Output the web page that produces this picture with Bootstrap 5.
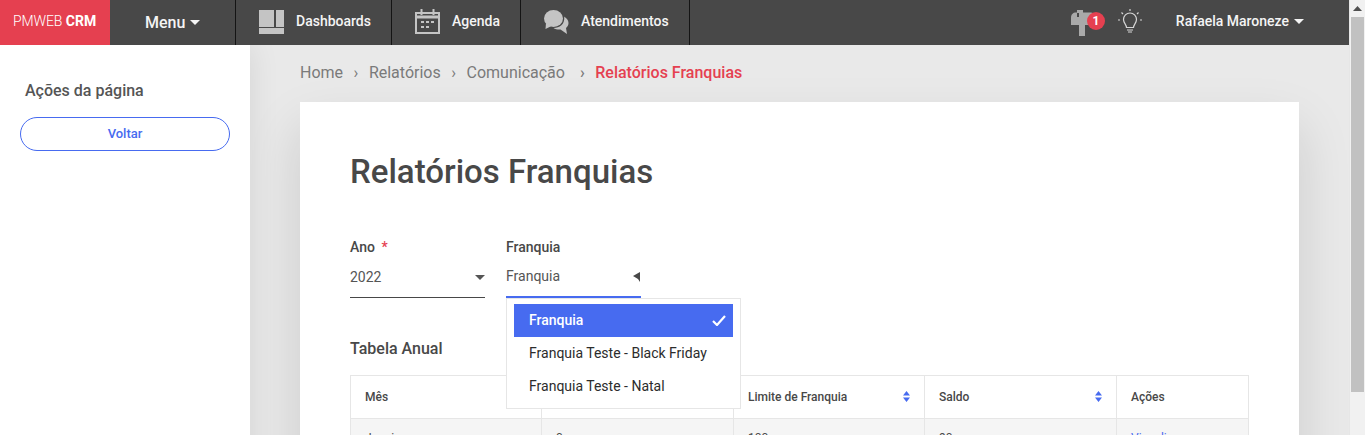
<!DOCTYPE html>
<html lang="pt-BR">
<head>
<meta charset="utf-8">
<title>Relatórios Franquias</title>
<link href="https://cdn.jsdelivr.net/npm/bootstrap@5.3.0/dist/css/bootstrap.min.css" rel="stylesheet">
<style>
html,body{height:435px;overflow:hidden}
body{font-family:Roboto,"Liberation Sans",sans-serif;color:#484848;background:#e9e9e9;font-size:14px}
.app-shell{width:1349px;height:435px;overflow:hidden}
.page-track{width:16px;height:435px;background:#f1f1f1;border-left:1px solid #e6e6e6}
.track-arrow{height:17px}
.track-thumb{height:375px;margin:0 1px 0 1px;background:#c1c1c1}
.top-bar{height:45px;background:#484848;position:relative;z-index:3;color:#f4f4f4}
.brand-box{width:110px;background:#e54050;color:#fff;font-size:14px;padding-left:13px;padding-bottom:3px}
.brand-thin{font-weight:300;letter-spacing:-.1px}
.menu-box{width:125px;font-size:16px;font-weight:500;padding-left:35px;gap:5px}
.nav-cell{border-left:1px solid #141414;font-weight:500;font-size:14px;height:45px;padding-bottom:2px}
.cell-a{width:156px;padding-left:23px;gap:12px}
.cell-b{width:129px;padding-left:23px;gap:12px}
.cell-c{width:170px;padding-left:23px;gap:12px;border-right:1px solid #141414}
.caret-down{display:inline-block;border-left:5px solid transparent;border-right:5px solid transparent;border-top:5px solid currentColor}
.right-tools{padding-bottom:3px}
.user-name{font-weight:500;font-size:14px;margin-left:34px;margin-right:45px;gap:5px}
.notify-wrap{position:relative;width:36px;height:30px;margin-right:11px}
.notify-dot{position:absolute;left:16px;top:6px;width:18px;height:18px;border-radius:50%;background:#e54050;color:#fff;font-size:12px;font-weight:700;line-height:18px;text-align:center}
.side-col{width:250px;background:#fff;position:relative;z-index:2;box-shadow:0 0 30px rgba(0,0,0,.09);padding:36px 20px 0}
.side-title{font-size:16px;font-weight:500;margin:0 0 17px 5px;line-height:19px;color:#555}
.back-btn{display:block;width:210px;height:34px;border:1px solid #476bf0;border-radius:17px;color:#476bf0;background:#fff;font-size:13px;font-weight:500;padding:0;line-height:32px}
.main-col{flex:1;padding:0 50px 0 50px;min-width:0}
.crumbs{--bs-breadcrumb-margin-bottom:0;--bs-breadcrumb-item-padding-x:10.5px;--bs-breadcrumb-divider:"›";height:57px;align-items:center;font-size:16px;padding-bottom:2px}
.crumbs .breadcrumb-item,.crumbs .breadcrumb-item::before{color:#7a7a7a}
.crumbs .breadcrumb-item.active{color:#e54050;font-weight:500;padding-left:15px}
.sheet{background:#fff;box-shadow:0 25px 50px rgba(0,0,0,.13);height:600px;padding:50px}
.sheet-title{font-size:33px;font-weight:500;line-height:40px;margin:0;color:#484848}
.field-row{margin-top:47px;gap:21px}
.field-box{width:135px;position:relative}
.field-label{font-size:14px;font-weight:500;line-height:17px;margin:0;color:#484848}
.req-mark{color:#e54050;margin-left:3px}
.field-value{height:42px;border-bottom:1px solid #484848;font-size:14px;color:#555;padding-top:1px}
.field-value.field-open{border-bottom:2px solid #476bf0}
.option-menu{position:absolute;left:0;top:59px;width:235px;height:111px;background:#fff;border:1px solid #e6e6e6;padding:5px 7px;z-index:1;--bs-list-group-border-width:0;--bs-list-group-bg:transparent;--bs-border-radius:0}
.option-menu .list-group-item{height:33px;padding:0 0 0 15px;font-size:14px;color:#2c2c2c;display:flex;align-items:center;justify-content:space-between}
.option-menu .list-group-item.active{background:#476bf0;color:#fff;font-weight:500;padding-right:7px}
.section-name{font-size:16px;font-weight:500;margin:41px 0 17px;line-height:19px;color:#484848}
.year-table{--bs-table-border-color:#e6e6e6;--bs-table-color:#484848;table-layout:fixed;width:898px;margin:0;font-size:12px}
.year-table th{font-weight:500;height:43px;padding:0 14px;vertical-align:middle;border-width:1px;position:relative}
.year-table td{background:#f5f5f5;--bs-table-bg:#f5f5f5;padding:10px 14px 9px;height:43px;border-width:1px}
.year-table a{color:#476bf0;text-decoration:none}
.sort-mark{float:right;margin-top:3px;display:block}
</style>
</head>
<body>
<div class="d-flex">
<div class="app-shell d-flex flex-column">
  <header class="top-bar d-flex align-items-stretch flex-shrink-0">
    <div class="brand-box d-flex align-items-center"><span><span class="brand-thin">PMWEB</span>&nbsp;<b>CRM</b></span></div>
    <div class="menu-box d-flex align-items-center"><span>Menu</span><span class="caret-down"></span></div>
    <div class="nav-cell cell-a d-flex align-items-center">
      <svg width="25" height="24" viewBox="0 0 25 24" fill="#c4c4c4"><rect x="0" y="0" width="15" height="17"/><rect x="17" y="0" width="8" height="17"/><rect x="0" y="18" width="25" height="6"/></svg>
      <span>Dashboards</span>
    </div>
    <div class="nav-cell cell-b d-flex align-items-center">
      <svg width="25" height="25" viewBox="0 0 25 25" fill="none" stroke="#c4c4c4" stroke-width="2"><rect x="1" y="4" width="23" height="20"/><path d="M1 8h23" stroke-width="3"/><path d="M6.500 0v6M18.500 0v6" stroke-width="2"/><path d="M6 13h3M11 13h3M16 13h3M6 18h3M11 18h3" stroke-width="2"/></svg>
      <span>Agenda</span>
    </div>
    <div class="nav-cell cell-c d-flex align-items-center">
      <svg width="25" height="24" viewBox="0 0 25 24" fill="#c4c4c4"><ellipse cx="9.500" cy="8.500" rx="9.500" ry="8.500"/><path d="M2 13l-.5 6 6-3z"/><path d="M19.800 6.500c2.800 1.500 4.700 3.800 4.700 6.500 0 2.100-1 3.700-2.500 5l1 6-6.500-4.500c-2 .2-5 0-7-1.500 6 0 11.500-3.500 10.700-11.500z"/></svg>
      <span>Atendimentos</span>
    </div>
    <div class="right-tools ms-auto d-flex align-items-center">
      <div class="notify-wrap">
        <svg width="24" height="26" viewBox="0 0 24 26" fill="#a9a9a9" class="d-block mt-1"><path d="M5 2.500h14c3 0 5 2 5 5V15H0V7.500c0-3 2-5 5-5z"/><rect x="8" y="14" width="6" height="12"/><rect x="6" y="0" width="2" height="7" fill="#484848"/><rect x="6" y="0" width="6" height="3"/></svg>
        <span class="notify-dot">1</span>
      </div>
      <svg width="24" height="24" viewBox="0 0 24 24" fill="none" stroke="#d6d6d6" stroke-width="1.200"><path d="M8.500 17.500c0-3-3-4.500-3-8a6.500 6.500 0 0 1 13 0c0 3.500-3 5-3 8z" transform="translate(0 1)"/><path d="M9 21h6M10 23h4"/><path d="M12 0v2M3.500 3.500l1.500 1.500M20.500 3.500L19 5M0 11h2M22 11h2"/></svg>
      <div class="user-name d-flex align-items-center"><span>Rafaela Maroneze</span><span class="caret-down"></span></div>
    </div>
  </header>
  <div class="d-flex flex-grow-1">
    <aside class="side-col flex-shrink-0">
      <h2 class="side-title">Ações da página</h2>
      <button type="button" class="btn back-btn">Voltar</button>
    </aside>
    <main class="main-col">
      <ol class="breadcrumb crumbs">
        <li class="breadcrumb-item">Home</li>
        <li class="breadcrumb-item">Relatórios</li>
        <li class="breadcrumb-item">Comunicação</li>
        <li class="breadcrumb-item active">Relatórios Franquias</li>
      </ol>
      <section class="sheet">
        <h1 class="sheet-title">Relatórios Franquias</h1>
        <div class="field-row d-flex">
          <div class="field-box">
            <p class="field-label">Ano <span class="req-mark">*</span></p>
            <div class="field-value d-flex align-items-center justify-content-between"><span>2022</span><span class="caret-down"></span></div>
          </div>
          <div class="field-box">
            <p class="field-label">Franquia</p>
            <div class="field-value field-open d-flex align-items-center justify-content-between">
              <span>Franquia</span>
              <svg width="8" height="10" viewBox="0 0 8 10" fill="#484848"><path d="M7 0v10L5 7 0 4z"/></svg>
            </div>
            <div class="option-menu list-group">
              <div class="list-group-item active"><span>Franquia</span>
                <svg width="14" height="11" viewBox="0 0 14 11" fill="none" stroke="#fff" stroke-width="2.200"><path d="M1 6l4 4 8-9"/></svg>
              </div>
              <div class="list-group-item">Franquia Teste - Black Friday</div>
              <div class="list-group-item">Franquia Teste - Natal</div>
            </div>
          </div>
        </div>
        <h2 class="section-name">Tabela Anual</h2>
        <table class="table table-bordered year-table">
          <colgroup><col style="width:191px"><col style="width:192px"><col style="width:191px"><col style="width:192px"><col style="width:132px"></colgroup>
          <thead>
            <tr>
              <th>Mês</th>
              <th></th>
              <th>Limite de Franquia<svg class="sort-mark" width="7" height="11" viewBox="0 0 7 11" fill="#476bf0"><path d="M3.500 0l3.500 4.500H0zM0 6.500h7L3.500 11z"/></svg></th>
              <th>Saldo<svg class="sort-mark" width="7" height="11" viewBox="0 0 7 11" fill="#476bf0"><path d="M3.500 0l3.500 4.500H0zM0 6.500h7L3.500 11z"/></svg></th>
              <th>Ações</th>
            </tr>
          </thead>
          <tbody>
            <tr><td>Janeiro</td><td>0</td><td>100</td><td>90</td><td><a href="#">Visualizar</a></td></tr>
          </tbody>
        </table>
      </section>
    </main>
  </div>
</div>
<div class="page-track flex-shrink-0">
  <div class="track-arrow d-flex justify-content-center align-items-center"><svg width="9" height="5" viewBox="0 0 9 5" fill="#505050"><path d="M4.500 0L9 5H0z"/></svg></div>
  <div class="track-thumb"></div>
</div>
</div>
<script src="https://cdn.jsdelivr.net/npm/bootstrap@5.3.0/dist/js/bootstrap.bundle.min.js"></script>
</body>
</html>
